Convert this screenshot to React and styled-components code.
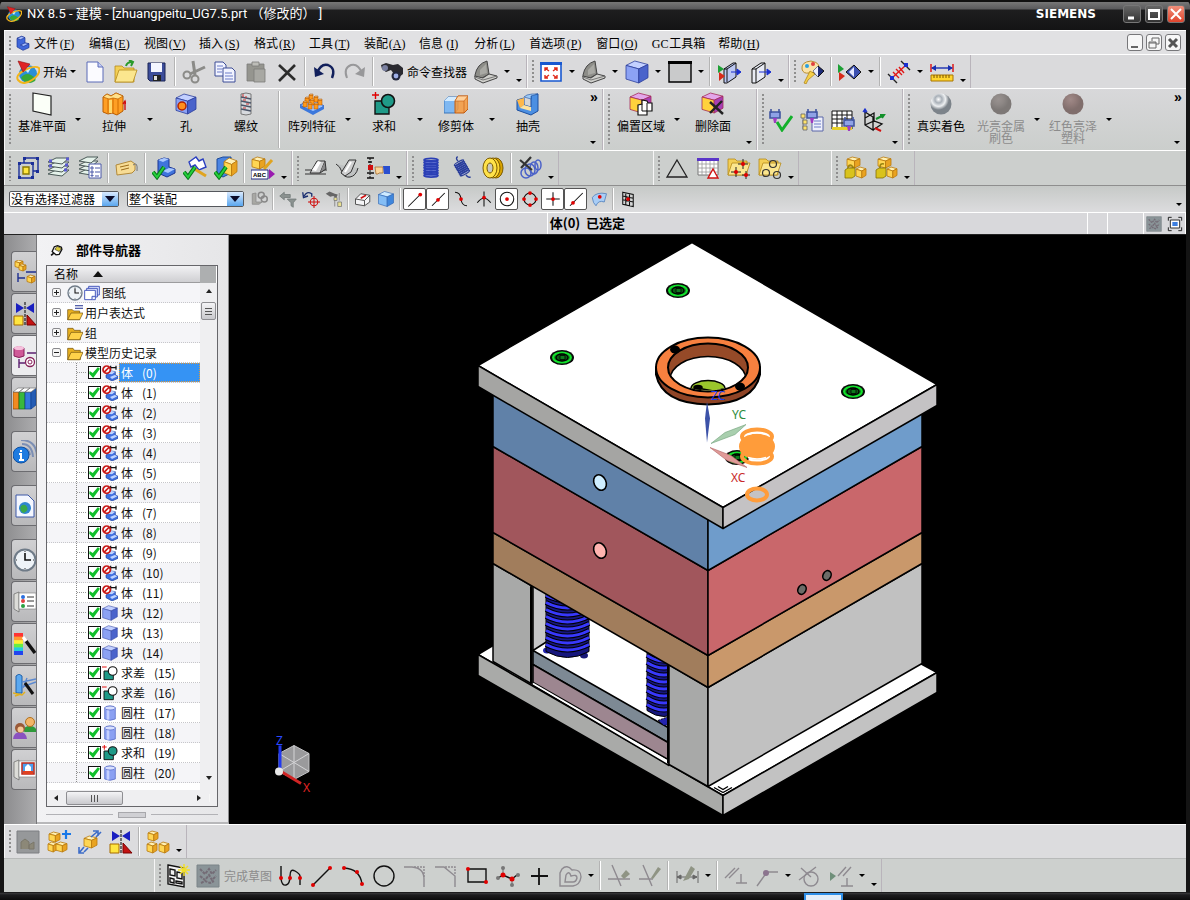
import React from 'react'
import styled, {createGlobalStyle, css} from 'styled-components'

const cjk = `'Noto Sans CJK SC', sans-serif`

const GlobalStyle = createGlobalStyle`
	*, *::before, *::after {
		box-sizing: border-box;
	}
	body {
		margin: 0;
		background: #101010;
		font: 12px/12px ${cjk};
		color: #000;
	}
	button, select {
		font: inherit;
		color: inherit;
		padding: 0;
		border: 0;
		background: none;
	}
	ul {
		margin: 0;
		padding: 0;
		list-style: none;
	}
	svg {
		display: block;
		flex: none;
	}
`

/* ---------- drawing helpers ---------- */

const BLUE = ['#c3d0ff', '#8ca2f4', '#4a63cb', '#2c3f9c']
const GOLD = ['#fff0b4', '#ffd653', '#e9a321', '#b97a0c']
const GLASS = ['#cdeaff', '#84bdf5', '#3f86dc', '#2860b0']
const VIOLET = ['#e3a6ea', '#ffd23c', '#a63fb5', '#a32a58']

function Cube({x = 3, y = 2, w = 18, h = 20, c = BLUE}) {
	const p = (a, b) => `${x + a * w},${y + b * h}`
	return (
		<g stroke={c[3]} strokeWidth=".8" strokeLinejoin="round">
			<polygon points={[p(0.4, 0), p(1, 0.16), p(0.58, 0.36), p(0, 0.2)].join(' ')} fill={c[0]} />
			<polygon points={[p(0, 0.2), p(0.58, 0.36), p(0.58, 1), p(0, 0.82)].join(' ')} fill={c[1]} />
			<polygon points={[p(0.58, 0.36), p(1, 0.16), p(1, 0.76), p(0.58, 1)].join(' ')} fill={c[2]} />
		</g>
	)
}

const Dot = ({x, y, r = 2, c = '#e00000'}) => <circle cx={x} cy={y} r={r} fill={c} />

const Tick = () => (
	<g fill="none">
		<path d="M1 16l4 5 7-10" stroke="#0a7a1c" strokeWidth="4" />
		<path d="M1 16l4 5 7-10" stroke="#25d03c" strokeWidth="2" />
	</g>
)

const Folder = ({y = 3}) => (
	<g stroke="#b58a1a" strokeWidth=".8">
		<path d={`M1 ${y + 2}h7l2 2h10v14H1z`} fill="#f3cf55" />
		<path d={`M1 ${y + 18}l4-12h18l-4 12z`} fill="#fbe68e" />
	</g>
)

const Laptop = () => (
	<g stroke="#444" strokeLinejoin="round">
		<path d="M1 15Q3 4 13 1l2 13-7 4-7-1z" fill="#8d8d88" />
		<path d="M6 10l6-6 1 9-7 2z" fill="#a9a9a4" stroke="none" />
		<path d="M1 16l8 2 6-4 8 2v2L9 23l-8-4z" fill="#d0d0cc" />
		<path d="M1 17l8 3 14-4" stroke="#777" fill="none" />
	</g>
)

const Plug = ({x = 0, y = 0}) => (
	<g transform={`translate(${x} ${y})`}>
		<path d="M1 0v4M9 0v4M0 3h10v6H0z" fill="#8fa2e6" stroke="#4256a0" strokeWidth="1.6" />
		<path d="M3 9h4l-1 5H4z" fill="#a03cc0" />
	</g>
)

const Coil = ({c = '#2b3fb5', n = 7}) => (
	<g fill="none" stroke={c} strokeWidth="1.8">
		<path d="M5 4h14v16H5z" fill="#7d8ce0" stroke="none" />
		{Array.from({length: n}, (_, i) => (
			<ellipse key={i} cx="12" cy={4 + i * 2.6} rx="7" ry="1.6" />
		))}
	</g>
)

const Lock = ({open}) => (
	<g>
		<path
			d={open ? 'M6 15V11q0-4 4-3' : 'M5 15v-4q2-4 5 0v4'}
			fill="none"
			stroke="#9a8410"
			strokeWidth="1.6"
		/>
		<path d="M2 14l3-2h7v8l-3 2H2z" fill="#d9c31c" stroke="#837008" strokeWidth=".8" />
	</g>
)

const Mirror = () => (
	<>
		<path d="M3 1v10l8-5zM21 1v10l-8-5z" fill="#1a1fc0" />
		<path d="M12 0v24" stroke="#000" strokeDasharray="3 1" />
		<path d="M1 14h9v9H1z" fill="#ffe640" stroke="#a66a00" />
		<path d="M14 13v10h9z" fill="#c31212" stroke="#7a0000" />
	</>
)

const Ball = ({id, c}) => (
	<>
		<radialGradient id={id} cx="38%" cy="28%">
			{c.map((v, i) => (
				<stop key={v} offset={i / (c.length - 1)} stopColor={v} />
			))}
		</radialGradient>
		<circle cx="12" cy="12" r="10.5" fill={`url(#${id})`} />
	</>
)

const Unite = ({sign, fill = '#1f9a88'}) => (
	<>
		<path d="M3 9h14v13H3z" fill="#1f9a88" stroke="#111" strokeWidth="1.4" />
		<circle cx="16" cy="9" r="6.5" fill={fill} stroke="#111" strokeWidth="1.6" />
		<path d={sign === '+' ? 'M0 3h7M3.500 0v7' : 'M0 3h7'} stroke="#e00000" strokeWidth="1.4" />
	</>
)

const Book = () => (
	<g stroke="#999" strokeWidth=".6">
		<path d="M1 4l5-2v20l-5-3z" fill="#dcdcd8" stroke="#555" />
		<path d="M6 3h17v16H6z" fill="#fff" stroke="#777" />
	</g>
)

const grey = {fill: 'none', stroke: '#8e8a90', strokeWidth: 1.4}
const line = {fill: 'none', stroke: '#111', strokeWidth: 1.4}

const glyphs = {
	nx: (
		<>
			<circle cx="12" cy="14" r="9" fill="#2a8fd8" />
			<path d="M5 18q4-6 10-3t4 6q-8 5-14-3z" fill="#38a838" />
			<path d="M7 8q3-2 8 0l-3 5z" fill="#c9ecff" />
			<path d="M2 20Q-1 15 9 10T23 8q2 6-7 12T2 20z" fill="none" stroke="#f2b51c" strokeWidth="2" />
			<path d="M2 1l12 3-7 8z" fill="#e02424" stroke="#8e0d0d" strokeWidth=".6" />
		</>
	),
	part: (
		<g stroke="#1c3592" strokeWidth="1" strokeLinejoin="round">
			<path d="M3 5l7-3 5 2v8l6 1v6l-9 4-9-5z" fill="#3f67da" />
			<path d="M3 5l7-3 5 2-7 3zM8 15l7-3 6 1-8 4z" fill="#a9c0ff" />
		</g>
	),
	new: (
		<g stroke="#5b6bb8">
			<path d="M4 2h11l5 5v15H4z" fill="#fbfbff" />
			<path d="M15 2v5h5" fill="#c7cff5" />
		</g>
	),
	open: (
		<>
			<Folder y={4} />
			<path d="M12 6q1-4 6-4M15 0l4 2-2 4" fill="none" stroke="#2a9a2a" strokeWidth="2" />
		</>
	),
	save: (
		<>
			<path d="M3 3h17v18H5l-2-2z" fill="#3c4d9a" stroke="#1a2455" />
			<path d="M6 3h11v9H6z" fill="#f4f6ff" />
			<path d="M8 15h8v6H8z" fill="#222" />
			<path d="M9 16h3v4H9z" fill="#ddd" />
		</>
	),
	cut: (
		<g fill="none" stroke="#8b8b88" strokeWidth="2">
			<path d="M11 1l2 14M23 7L8 14" strokeWidth="3" />
			<circle cx="5" cy="15" r="3.5" />
			<circle cx="13" cy="19" r="3.5" />
		</g>
	),
	copy: (
		<g stroke="#3d4c96">
			<path d="M2 2h8l3 3v11H2z" fill="#f2f4ff" />
			<path d="M10 8h9l3 3v11H10z" fill="#f2f4ff" />
			<path d="M4 6h6M4 9h5M4 12h5M12 13h7M12 16h8M12 19h8" stroke="#6d7dc8" />
		</g>
	),
	paste: (
		<g stroke="#7c7c78" strokeWidth=".8">
			<path d="M3 4h17v17H3z" fill="#95958f" />
			<path d="M8 2h7v4H8z" fill="#bdbdb8" />
			<path d="M10 9h11v13H10z" fill="#a8a8a3" />
		</g>
	),
	del: <path d="M4 5l16 15M20 5L4 21" stroke="#2c2c2c" strokeWidth="2.6" />,
	undo: (
		<>
			<path d="M5 13Q9 3 16 5q8 3 4 13" fill="none" stroke="#12205c" strokeWidth="2.4" />
			<path d="M2 7l1 10 9-3z" fill="#12205c" />
		</>
	),
	redo: (
		<>
			<path d="M19 13Q15 3 8 5 0 8 4 18" fill="none" stroke="#98989a" strokeWidth="2" />
			<path d="M22 7l-1 10-9-3z" fill="#98989a" />
		</>
	),
	binoc: (
		<>
			<path d="M1 5l5-2 7 2 5-1 5 4v6l-5 4-4-4-3-4-5 2-4-3z" fill="#2a2a30" />
			<circle cx="5" cy="8" r="3" fill="#7a80a0" />
			<circle cx="16" cy="16" r="4.5" fill="#23283e" />
			<circle cx="16" cy="16" r="2.4" fill="#9fb0e8" />
		</>
	),
	laptop: <Laptop />,
	fit: (
		<>
			<path d="M2 3h20v18H2z" fill="#fff" stroke="#1858d0" strokeWidth="1.6" />
			<path d="M1 2h22v3H1z" fill="#1858d0" />
			<path
				d="M10 11L6 8M6 11V8h3M14 11l4-3M15 8h3v3M10 15l-4 3M6 15v3h3M14 15l4 3M18 15v3h-3"
				fill="none"
				stroke="#e02a1a"
				strokeWidth="1.4"
			/>
		</>
	),
	cube: <Cube x={1} y={1} w={22} h={22} />,
	box: (
		<>
			<path d="M1 2h22v20H1z" fill="#c9cacb" stroke="#000" strokeWidth="1.4" />
			<path d="M0 1h24v3H0z" fill="#000" />
		</>
	),
	section: (
		<>
			<path d="M7 9l9-6h3v14l-9 6H7z" fill="#bdc8f2" stroke="#111" />
			<path d="M10 9v13M7 9h3l9-6" stroke="#111" fill="none" />
			<path d="M1 5l6 4-6 4z" fill="#1da035" />
			<path d="M2 12l6 4-6 5z" fill="#d82a1a" />
			<path d="M14 12h7M20 9l4 3-4 3z" stroke="#1a2fd0" fill="#1a2fd0" />
		</>
	),
	sectionEdit: (
		<>
			<path d="M4 9l9-6h4v14l-9 6H4z" fill="#e8ebf4" stroke="#111" />
			<path d="M8 9v14M4 9h4l9-6" stroke="#111" fill="none" />
			<path d="M11 12h9M19 9l4 3-4 3z" stroke="#1a2fd0" fill="#1a2fd0" />
		</>
	),
	palette: (
		<>
			<path d="M10 1Q0 2 1 9q1 5 7 4l8-1q6-9-6-11z" fill="#fbe3a8" stroke="#b98d30" />
			<Dot x={6} y={6} c="#2aa0e0" />
			<Dot x={12} y={4} c="#e04040" />
			<path d="M9 11l5 3-7 6-2 4-2-1 3-6z" fill="#f5cf4a" stroke="#a87c10" strokeWidth=".7" />
			<path d="M12 11l5-5 6 5-6 6z" fill="#1d2b78" stroke="#111" />
			<path d="M17 6l-5 5 5 6z" fill="#e9edff" />
		</>
	),
	showHide: (
		<>
			<path d="M0 4l6 5-6 4z" fill="#1da035" />
			<path d="M1 12l6 4-6 5z" fill="#d82a1a" />
			<path d="M8 12l8-7 7 7-7 7z" fill="#3c50b0" stroke="#111" />
			<path d="M16 7l-5 5 5 5z" fill="#e5e9ff" />
		</>
	),
	measure: (
		<g strokeWidth="1.4">
			<path d="M1 14l9 9M14 1l9 9" stroke="#222" />
			<path d="M5 18L19 5" stroke="#e01818" />
			<path d="M6 12l6 6M9 9l6 6M12 7l5 6" stroke="#e01818" />
			<path d="M3 16h4v4H3zM17 3h4v4h-4z" fill="#1a2fd0" />
		</g>
	),
	ruler: (
		<>
			<path d="M1 4v8M23 4v8" stroke="#e01818" strokeWidth="1.5" />
			<path d="M2 8h20" stroke="#1a2fb0" strokeWidth="1.4" />
			<path d="M1 8l5-3v6zM23 8l-5-3v6z" fill="#1a2fb0" />
			<path d="M1 15h22v6H1z" fill="#ffd52e" stroke="#a87400" />
			<path d="M4 15v3M7 15v3M10 15v3M13 15v3M16 15v3M19 15v3" stroke="#7a5200" />
		</>
	),
	plane: <path d="M3 1l18 3v19L3 19z" fill="#fbfff8" stroke="#222" strokeWidth="1.2" />,
	extrude: (
		<>
			<path d="M1 5l4-3 4 2 5-3 7 3v15l-6 4-5-2-4 1-5-2z" fill="#ff9f24" stroke="#b85c00" />
			<path d="M1 5l4-3 4 2 5-3 7 3-5 3-5-1-4 1z" fill="#ffe08a" stroke="#b85c00" strokeWidth=".7" />
			<path d="M6 7v14M11 6v15M16 7v15" stroke="#d06c00" />
			<path d="M7 8h3v13H7z" fill="#ffd76a" />
			<path d="M23 18V9M21 12l2-3 1 3" stroke="#d01010" fill="none" strokeWidth="1.4" />
		</>
	),
	hole: (
		<>
			<Cube x={2} y={2} w={20} h={20} />
			<circle cx="8" cy="14" r="4" fill="#ff8f1c" stroke="#b32400" strokeWidth="1.5" />
		</>
	),
	thread: (
		<>
			<path d="M7 2q5-2 10 0v20q-5 2-10 0z" fill="#d7dade" stroke="#777" />
			<path d="M7 5l10 2M7 9l10 2M7 13l10 2M7 17l10 2" stroke="#4b5568" strokeWidth="1.6" />
			<path d="M9 2v3M12 4v2M9 8h3M12 12h3M9 16h3" stroke="#c33" />
		</>
	),
	pattern: (
		<>
			<path d="M0 13l12-6 12 7-11 7z" fill="#9dc4ff" stroke="#2f66c8" />
			<path d="M0 13l13 6 11-5v3l-11 6L0 16z" fill="#3c78dc" />
			{[[11, 6], [7, 9], [16, 8], [12, 11], [5, 13], [20, 11], [10, 15], [16, 15]].map(([x, y]) => (
				<g key={`${x}-${y}`} stroke="#a85200" strokeWidth=".5">
					<path d={`M${x - 2} ${y - 3}h4v5h-4z`} fill="#ff9a1e" />
					<path d={`M${x - 2} ${y - 3}l1-1h3v1z`} fill="#ffd28a" />
				</g>
			))}
		</>
	),
	unite: <Unite sign="+" />,
	subtract: <Unite sign="-" fill="#fff" />,
	trim: (
		<>
			<path d="M0 9l4-4h10v12l-3 4H0z" fill="#7fb8f2" stroke="#3b74b8" />
			<path d="M0 9h11l3-4H4z" fill="#d3ebff" />
			<path d="M11 9l3-5h10v13l-4 4h-9z" fill="#f79a3c" fillOpacity=".85" stroke="#c25c10" />
			<path d="M11 9h9l4-5H14zM20 9v12" fill="#ffd09a" stroke="#c25c10" strokeWidth=".6" />
		</>
	),
	shell: (
		<>
			<path d="M1 8l7-2v7l7 2V3l7-1v17l-7 4-14-5z" fill="#4b8fe2" stroke="#1d4f9e" />
			<path d="M1 8l7-2v7l-4 3z" fill="#ffb84a" />
			<path d="M4 16l4-3 7 2v4z" fill="#ffe3a0" />
			<path d="M8 5l3-2 5-1 6 0-7 2v3z" fill="#9fcaf6" stroke="#1d4f9e" strokeWidth=".6" />
		</>
	),
	offset: (
		<>
			<Cube x={1} y={1} w={21} h={20} c={VIOLET} />
			<path d="M9 13l4-1V8l5 1 1 2h4v8h-5v4h-9z" fill="#fff" stroke="#111" strokeWidth="1.2" />
			<path d="M13 12v7h5M18 11v8" stroke="#111" fill="none" />
		</>
	),
	delFace: (
		<>
			<Cube x={1} y={1} w={21} h={20} c={VIOLET} />
			<path d="M9 10l13 12M21 9L9 21" stroke="#222" strokeWidth="2.4" />
		</>
	),
	plugCheck: (
		<>
			<Plug x={1} y={1} />
			<path d="M8 14l5 8L23 8" fill="none" stroke="#12b02a" strokeWidth="3" />
		</>
	),
	plugTree: (
		<>
			<path d="M3 8v13" stroke="#777" />
			<path d="M1 6h4v4H1zM3 12h4v4H3zM3 18h4v4H3z" fill="#ffe36a" stroke="#666" strokeWidth=".8" />
			<path d="M12 9h11v14H12z" fill="#eef0fb" stroke="#5b66a8" />
			<path d="M14 13h7M14 16h7M14 19h7" stroke="#6d7dc8" />
			<Plug x={7} y={1} />
		</>
	),
	plugTable: (
		<>
			<path d="M1 3h20v18H1z" fill="#fff" stroke="#111" />
			<path d="M1 7h20M1 11h20M1 15h20M6 3v16M11 3v16M16 3v16" stroke="#111" />
			<path d="M1 19h20v3H1z" fill="#e6cf28" />
			<Plug x={13} y={9} />
		</>
	),
	csys: (
		<g strokeWidth="1.3" fill="none">
			<path d="M3 4v13l8 5V9zM3 10l9-5v9M3 17l9-4 8 3-9 6" stroke="#111" />
			<path d="M3 5V1M1 4l2-3 2 3" stroke="#1a2fd0" />
			<path d="M14 11l8-4M18 7l4 0-2 3" stroke="#12902a" strokeWidth="2" />
			<path d="M13 20l6 3" stroke="#d01010" strokeWidth="2" />
		</g>
	),
	chrome: <Ball id="ballChrome" c={['#ffffff', '#a9b0b8', '#eef0f2', '#7c838a']} />,
	metal: <Ball id="ballMetal" c={['#999290', '#8e8886', '#7d7876']} />,
	gloss: <Ball id="ballGloss" c={['#a08a88', '#927c7a', '#806e6c']} />,
	selBox: (
		<g fill="none" stroke="#1b2f98" strokeWidth="1.4">
			<path d="M8 2h14v13h-5M8 2v5M3 7h14v15H3z" />
			<path d="M7 11h6v7H7z" fill="#ffe640" stroke="#8c7a00" />
			<path d="M2 6h3v3H2zM15 6h3v3h-3zM2 20h3v3H2zM15 20h3v3h-3zM20 1h3v3h-3zM20 14h3v3h-3zM7 1h3v3H7z" fill="#1b2f98" stroke="none" />
		</g>
	),
	layers: (
		<g stroke="#4b5a58" strokeWidth="1">
			{[18, 14, 10, 6].map(y => (
				<path key={y} d={`M1 ${y}l8-4h13l-7 6z`} fill="#e4f2ea" />
			))}
			<path d="M2 5h3M19 3h3M18 9h3M2 10h3M17 14h3" stroke="#5b5bd0" strokeWidth="3" />
		</g>
	),
	layerList: (
		<g stroke="#4b5a58">
			{[17, 13, 9, 5].map(y => (
				<path key={y} d={`M1 ${y}l8-4h11l-7 6z`} fill="#e4f2ea" />
			))}
			<path d="M11 8h12v14H11z" fill="#fff" stroke="#4b58a8" />
			<path d="M13 11h2v2h-2zM13 15h2v2h-2zM13 19h2v1h-2zM17 12h5M17 16h5M17 20h4" stroke="#4b58a8" fill="none" />
		</g>
	),
	tag: (
		<>
			<path d="M1 9l15-4 4 3v6l-3 3-15 2z" fill="#f7dc94" stroke="#b28a3a" />
			<path d="M5 11l9-2M6 14l8-2" stroke="#9c6c1c" />
			<path d="M18 9q5-4 4 6" fill="none" stroke="#777" />
		</>
	),
	chkPart: (
		<>
			<path d="M6 4l6-2 5 1v8l6 2v4l-8 4-9-4z" fill="#3f74dc" stroke="#1c3592" />
			<path d="M6 4l6-2 5 1-6 3zM11 15l6-3 6 1-7 4z" fill="#a9c8ff" />
			<Tick />
		</>
	),
	chkBrush: (
		<>
			<path d="M6 6l7-5 3 4 4-2 3 8-7 3-4-5-4 2z" fill="#fff" stroke="#2a3fc0" strokeWidth="1.4" />
			<path d="M10 12l13 8" stroke="#e0a420" strokeWidth="3" />
			<Tick />
		</>
	),
	chkAsm: (
		<>
			<path d="M3 3l6-2h8v16l-8 4-6-3z" fill="#4b85e2" stroke="#1c4a9a" />
			<Cube x={10} y={2} w={13} h={18} c={GOLD} />
			<Tick />
		</>
	),
	abc: (
		<>
			<Cube x={1} y={1} w={13} h={12} c={GOLD} />
			<path d="M21 4l-8 9" stroke="#e0a420" strokeWidth="3" />
			<path d="M0 14h17v9H0z" fill="#fff" stroke="#222a80" />
			<text x="2" y="21" fontSize="6" fontWeight="700" fontFamily="Liberation Sans">
				ABC
			</text>
			<path d="M18 13l6 5-6 5z" fill="#9a1ab0" />
		</>
	),
	rib: (
		<g stroke="#333">
			<path d="M1 14h22M1 18h21" />
			<path d="M6 17L13 5h8l-5 12z" fill="#cfd0d0" />
			<path d="M21 5l1 8-6 4" fill="#888" />
			<path d="M8 14l6-9 3 1-5 9z" fill="#fff" stroke="none" />
		</g>
	),
	groove: (
		<g stroke="#333">
			<path d="M1 8q4 2 6 8t8 5 8-9" fill="#bfc2c2" />
			<path d="M6 17L14 4h7l-5 12-6 4z" fill="#cfd0d0" />
			<path d="M10 16l6-10" stroke="#fff" strokeWidth="2" />
		</g>
	),
	handList: (
		<>
			<path d="M1 2h7M2 6h4M1 17h7M1 22h7" stroke="#111" strokeWidth="1.6" />
			<path d="M4 2v20" stroke="#111" strokeDasharray="2 1" />
			<path d="M2 9h5v5H2z" fill="#d01010" />
			<path d="M9 11h8v6h-4l-1 1h-2z" fill="#f8d49a" stroke="#a87030" strokeWidth=".8" />
			<path d="M17 10h7v8h-6z" fill="#2a4fd0" />
		</>
	),
	spring: <Coil />,
	springTilt: (
		<g transform="rotate(-30 12 12)">
			<g transform="translate(3 3) scale(.75)">
				<Coil c="#2b3f98" />
			</g>
			<path d="M12 4q-1-4 2-4M12 20q0 4 3 4" fill="none" stroke="#2b3f98" strokeWidth="1.4" />
		</g>
	),
	disc: (
		<>
			<ellipse cx="15" cy="12" rx="7" ry="10" fill="#d9a400" stroke="#7a5a00" />
			<ellipse cx="12" cy="12" rx="7" ry="10" fill="#ffd833" stroke="#7a5a00" />
			<ellipse cx="9" cy="12" rx="7" ry="10" fill="#ffe24a" stroke="#7a5a00" />
			<ellipse cx="9" cy="12" rx="3" ry="5" fill="#c9c9c0" stroke="#7a5a00" />
		</>
	),
	springDel: (
		<>
			<g fill="none" stroke="#4b62c8" strokeWidth="1.5">
				<ellipse cx="8" cy="17" rx="5" ry="5" />
				<ellipse cx="12" cy="14" rx="5" ry="6" />
				<ellipse cx="16" cy="12" rx="4" ry="6" />
				<ellipse cx="20" cy="9" rx="3" ry="5" />
			</g>
			<path d="M2 4l12 10M13 1L3 12" stroke="#333" strokeWidth="2.2" />
		</>
	),
	tri: <path d="M12 4l10 17H2z" fill="none" stroke="#222" strokeWidth="1.3" />,
	table: (
		<>
			<path d="M2 3h20v16H2z" fill="#fff" stroke="#777" />
			<path d="M1 2h22v3H1z" fill="#5a35c8" />
			<path d="M2 8h20M2 12h20M2 16h20M6 5v14M10 5v14M14 5v14M18 5v14" stroke="#999" strokeWidth=".8" />
			<path d="M17 13l5 9H12z" fill="#fff" stroke="#d01010" strokeWidth="1.4" />
		</>
	),
	folderPts: (
		<>
			<Folder y={1} />
			<path d="M4 16h10M9 11v10M11 8h10M16 3v10M15 19h8M19 15v8" stroke="#222" />
			<Dot x={9} y={16} />
			<Dot x={16} y={8} />
			<Dot x={19} y={19} />
		</>
	),
	folderCirc: (
		<>
			<Folder y={1} />
			<g fill="none" stroke="#333" strokeWidth="1.2">
				<circle cx="15" cy="8" r="3.5" />
				<circle cx="8" cy="17" r="3.5" />
				<circle cx="19" cy="19" r="3.5" />
			</g>
		</>
	),
	lockAsm: (
		<>
			<Cube x={4} y={1} w={13} h={11} c={GOLD} />
			<Cube x={13} y={11} w={10} h={11} c={GOLD} />
			<Lock />
		</>
	),
	unlockAsm: (
		<>
			<Cube x={4} y={1} w={13} h={11} c={GOLD} />
			<Cube x={13} y={11} w={10} h={11} c={GOLD} />
			<Lock open />
		</>
	),
	chain: (
		<g fill="none" stroke="#888" strokeWidth="2">
			<path d="M3 5v14h9l4-3H8V4z" fill="#a8a8a4" strokeWidth="1" />
			<circle cx="15" cy="7" r="4" />
			<circle cx="19" cy="12" r="4" />
		</g>
	),
	filterOff: (
		<g fill="#8b9290" stroke="#6f7775">
			<path d="M1 8l6-5v3h8v4H7v3z" />
			<path d="M11 12h12l-4 5v6l-3-2v-4z" />
		</g>
	),
	snapUndo: (
		<>
			<path d="M3 8q3-7 10-3v4M1 3l1 7 6-2" fill="none" stroke="#1b2f70" strokeWidth="1.8" />
			<circle cx="16" cy="16" r="5" fill="none" stroke="#d01010" strokeWidth="1.4" />
			<path d="M16 8v16M8 16h16" stroke="#d01010" strokeWidth="1.4" />
		</>
	),
	snapTree: (
		<>
			<path d="M1 5l5-3 7 3 4 1-2 5-4-3-4 1z" fill="#666" />
			<path d="M12 10h4v4h-4zM17 16h5v6h-5z" fill="#e9e090" stroke="#777" />
			<path d="M13 14v8M19 4v10" stroke="#777" />
		</>
	),
	wire: (
		<g stroke="#444" strokeWidth="1.2">
			<path d="M2 12l7-7 12 2v9l-7 5-12-2z" fill="#f4f4f6" />
			<path d="M2 12l12 2 7-7M14 14v7" fill="none" />
			<path d="M9 11l7-4" stroke="#d01010" strokeWidth="2" />
		</g>
	),
	glass: <Cube x={2} y={2} w={20} h={20} c={GLASS} />,
	ptEnd: (
		<>
			<path d="M3 22L18 7" {...line} />
			<Dot x={19} y={6} r={2.5} />
		</>
	),
	ptMid: (
		<>
			<path d="M4 21L21 4" {...line} />
			<Dot x={12} y={13} r={2.5} />
		</>
	),
	ptCurve: (
		<>
			<path d="M4 3q7 0 8 9t8 9" {...line} />
			<Dot x={12} y={12} r={2.5} />
		</>
	),
	ptCross: (
		<>
			<path d="M12 2v20M3 17q9-12 18 0" {...line} />
			<Dot x={12} y={10} r={2.5} />
		</>
	),
	ptCenter: (
		<>
			<circle cx="12" cy="12" r="9" {...line} />
			<Dot x={12} y={12} r={2.5} />
		</>
	),
	ptQuad: (
		<>
			<circle cx="12" cy="12" r="8" {...line} />
			<Dot x={12} y={4} r={2.5} />
			<Dot x={12} y={20} r={2.5} />
			<Dot x={4} y={12} r={2.5} />
			<Dot x={20} y={12} r={2.5} />
		</>
	),
	ptExist: (
		<>
			<path d="M12 3v18M3 12h18" {...line} />
			<Dot x={12} y={12} r={2.5} />
		</>
	),
	ptOn: (
		<>
			<path d="M4 21L21 4" {...line} />
			<Dot x={8} y={17} r={2.5} />
		</>
	),
	ptFace: (
		<>
			<path d="M3 10q6-8 19-5l-3 11q-8-3-11 5-4-3-5-11z" fill="#a9cdf6" stroke="#4a7ab8" />
			<Dot x={13} y={9} r={2.5} />
		</>
	),
	grid: (
		<>
			<path d="M5 3l14 3v16L5 19zM5 8l14 3M5 13l14 3M9 4v16M14 5v16" {...line} />
			<Dot x={12} y={12} r={2.5} />
		</>
	),
	off: (
		<>
			<path d="M1 1h22v22H1z" fill="#8a9498" stroke="#7a8488" />
			<path
				d="M4 5l5 5 4-5 3 5 4-4M4 12l5 4 4-5 3 5 4-4M5 19l4-2 5 2 4-2"
				fill="none"
				stroke="#746c76"
				strokeWidth="2"
				strokeDasharray="3 1"
			/>
		</>
	),
	offAsm: (
		<>
			<path d="M1 1h22v22H1z" fill="#96989a" stroke="#7c7e82" />
			<path d="M5 19v-7l4-3 4 3v7M13 19v-4l5-3v7z" fill="#8c8878" stroke="#7a776a" />
		</>
	),
	full: (
		<>
			<path d="M2 7V2h5M17 2h5v5M22 17v5h-5M7 22H2v-5" fill="none" stroke="#222" strokeWidth="1.5" />
			<path d="M5 6h14v12H5z" fill="#fff" stroke="#333" strokeWidth="1.5" />
			<path d="M8 9h8v6H8z" fill="#3c7ee0" />
		</>
	),
	asmAdd: (
		<>
			<Cube x={2} y={2} w={11} h={10} c={GOLD} />
			<Cube x={1} y={12} w={9} h={10} c={GOLD} />
			<Cube x={9} y={12} w={11} h={10} c={GOLD} />
			<path d="M19 0v9M15 4h9" stroke="#1878e8" strokeWidth="2.2" />
		</>
	),
	asmMove: (
		<>
			<Cube x={6} y={6} w={13} h={12} c={GOLD} />
			<path
				d="M13 7l6-5M15 1h5v5M18 7l5-5M1 23l5-6M1 17v6h5M6 22l4-4"
				fill="none"
				stroke="#3c6cc8"
				strokeWidth="1.6"
			/>
		</>
	),
	mirror: <Mirror />,
	asmArr: (
		<>
			<Cube x={2} y={1} w={10} h={10} c={GOLD} />
			<Cube x={1} y={12} w={10} h={11} c={GOLD} />
			<Cube x={13} y={12} w={10} h={11} c={GOLD} />
		</>
	),
	sketch: (
		<>
			<path d="M2 1l16 3v19L2 20z" fill="#f2f2f2" stroke="#111" strokeWidth="1.4" />
			<path d="M4 5l5 1v6l-5-1zM11 8l5 1v6l-5-1zM4 14l4 1v4l-4-1zM10 17l6 1v2l-6-1z" {...line} />
			<path d="M18 0v12M12 6h12M14 2l8 8M22 2l-8 8" stroke="#f2df2a" strokeWidth="1.5" />
		</>
	),
	profile: (
		<>
			<path d="M2 2v13q1 7 5 6t4-9 5-5 5 5v9" {...line} />
			<Dot x={2} y={14} />
			<Dot x={11} y={14} />
			<Dot x={21} y={14} />
		</>
	),
	skLine: (
		<>
			<path d="M3 21L20 4" {...line} />
			<Dot x={3} y={21} />
			<Dot x={20} y={4} />
		</>
	),
	arc: (
		<>
			<path d="M3 4q16 1 18 16" {...line} />
			<Dot x={3} y={4} />
			<Dot x={16} y={8} />
			<Dot x={21} y={20} />
		</>
	),
	circle: <circle cx="12" cy="12" r="10" {...line} />,
	fillet: (
		<>
			<path d="M1 3h8q12 1 12 12v8" {...grey} />
			<path d="M11 3h10v10" {...grey} strokeDasharray="2 1" />
		</>
	),
	chamfer: (
		<>
			<path d="M1 3h9l11 9v11" {...grey} />
			<path d="M11 3h10v8" {...grey} strokeDasharray="2 1" />
		</>
	),
	rect: (
		<>
			<path d="M3 5h18v13H3z" {...line} />
			<Dot x={3} y={5} />
			<Dot x={21} y={18} />
		</>
	),
	spline: (
		<>
			<path d="M2 14l5-3 9 4 5-4" {...line} />
			<path d="M7 11V4M16 15v6" stroke="#888" strokeWidth="1.4" />
			<Dot x={2} y={14} c="#777" />
			<Dot x={7} y={4} c="#777" />
			<Dot x={16} y={21} c="#777" />
			<Dot x={22} y={11} c="#777" />
			<Dot x={7} y={11} r={2.5} />
			<Dot x={16} y={15} r={2.5} />
		</>
	),
	point: <path d="M12 4v17M4 12h17" stroke="#111" strokeWidth="1.8" />,
	offCurve: <path d="M4 5q5-5 10 1 9-1 9 7-1 8-8 9H2V9zM8 11q3-5 5 1 6-2 6 2-1 4-4 4H7z" {...grey} />,
	trimSk: (
		<>
			<path d="M5 1l9 21M1 15h22" {...grey} />
			<path d="M14 12l5-6 4 4-6 5z" fill="#8f9484" />
		</>
	),
	extSk: (
		<>
			<path d="M5 1l9 21M1 15h14" {...grey} />
			<path d="M13 14l7-11 3 2-8 10z" fill="#8f9484" />
		</>
	),
	dim: (
		<>
			<path d="M2 7v12M23 7v12M2 13h20M2 13l4-2v4zM22 13l-4-2v4z" stroke="#666" fill="#666" />
			<path d="M8 17l8-15 4 3-6 10z" fill="#8f9484" />
		</>
	),
	parallel: <path d="M1 14L11 4M5 14L15 4M12 19h11M17 10v9" {...grey} />,
	coincide: (
		<>
			<path d="M2 22L12 8h11" {...grey} />
			<Dot x={11} y={9} r={3} c="#8b748e" />
		</>
	),
	tangent: (
		<>
			<circle cx="13" cy="15" r="7" {...grey} />
			<path d="M1 16L18 3M3 4l10 9" {...grey} />
		</>
	),
	autoCon: (
		<>
			<path d="M1 8l6 4-6 5z" fill="#6f8f7a" />
			<path d="M9 12l8-9M14 12l8-9M12 22h12M18 14v8" {...grey} />
		</>
	),
	asmNav: (
		<>
			<Cube x={2} y={0} w={8} h={8} c={GOLD} />
			<Cube x={6} y={4} w={7} h={7} c={GOLD} />
			<Cube x={14} y={15} w={8} h={8} c={GOLD} />
			<path d="M13 12h10M5 13v9M5 18h7" stroke="#1f2f90" strokeWidth="1.4" />
		</>
	),
	partNav: (
		<>
			<path d="M1 4q5-3 10 0v8q-5 3-10 0z" fill="#cf5a98" stroke="#86215a" />
			<ellipse cx="6" cy="4" rx="5" ry="2" fill="#f6c0dc" />
			<path d="M14 9h9M6 15v9M6 19h6" stroke="#5b1f70" strokeWidth="1.4" />
			<circle cx="17" cy="18" r="4.5" fill="#fff" stroke="#86215a" strokeWidth="1.3" />
			<circle cx="17" cy="18" r="2" fill="none" stroke="#86215a" />
		</>
	),
	books: (
		<g strokeWidth=".7">
			<path d="M0 6h6v17H0z" fill="#f08a22" stroke="#8c4200" />
			<path d="M6 6h6v17H6z" fill="#39b83c" stroke="#0f6a18" />
			<path d="M12 6h6v17h-6z" fill="#3478dc" stroke="#123f8c" />
			<path d="M18 6l5-4v17l-5 4z" fill="#245cb4" stroke="#123f8c" />
			<path d="M0 6l5-4h6L6 6zM6 6l5-4h6l-5 4zM12 6l5-4h6l-5 4z" fill="#fff" stroke="#777" />
		</g>
	),
	info: (
		<>
			<path d="M9 4q10 0 11 13M8 0q15 0 16 16M11 8q5 1 6 7" fill="none" stroke="#7c8fb4" strokeWidth="2" />
			<circle cx="8" cy="15" r="8" fill="#1e7be0" stroke="#0f4fa0" />
			<path d="M8 10v2M6 14h2v6M6 20h5" stroke="#fff" strokeWidth="2" fill="none" />
		</>
	),
	web: (
		<>
			<path d="M3 1h12l6 6v16H3z" fill="#f4f7ff" stroke="#3c58a8" />
			<circle cx="12" cy="14" r="6" fill="#2f86cf" />
			<path d="M8 12q4-3 6 1t-4 6q-4-3-2-7z" fill="#39a84a" />
		</>
	),
	clock: (
		<>
			<circle cx="12" cy="12" r="10.5" fill="#eef3f8" stroke="#6f7b88" strokeWidth="2" />
			<path d="M12 5v7h6" fill="none" stroke="#111" strokeWidth="1.6" />
			<path d="M12 3v1M12 20v1M3 12h1M20 12h1" stroke="#333" />
		</>
	),
	roles: (
		<>
			<Book />
			<Dot x={10} y={7} c="#2a6fe0" />
			<Dot x={10} y={11} c="#e04040" />
			<Dot x={10} y={16} c="#2aa040" />
			<path d="M14 7h7M14 11h7M14 16h7" stroke="#333" />
		</>
	),
	colors: (
		<>
			{['#f33', '#f93', '#fe3', '#6e4', '#2cd', '#24e'].map((c, i) => (
				<path key={c} d={`M1 ${1 + i * 3.6}h9v4H1z`} fill={c} />
			))}
			<path d="M13 9l9 12" stroke="#111" strokeWidth="3.5" />
			<path d="M10 5l3 4" stroke="#fff" strokeWidth="3" />
		</>
	),
	machine: (
		<>
			<path d="M3 2l3-2 3 2v17H3z" fill="#5aa8f0" stroke="#2060a8" />
			<path d="M9 8l14-3M9 13l14-5M14 4l-4 10" stroke="#5a88d0" strokeWidth="1.4" />
			<path d="M0 19l9 2 3-3M2 22l6-2" fill="none" stroke="#e0b020" strokeWidth="1.5" />
			<path d="M12 9l8 11" stroke="#111" strokeWidth="3" />
		</>
	),
	people: (
		<>
			<path d="M10 15q1-5 7-5t7 6H12z" fill="#2f9a3a" />
			<circle cx="17" cy="6" r="4.5" fill="#f2b568" stroke="#b0701c" />
			<path d="M0 23q1-7 7-7t7 7z" fill="#8a52c0" />
			<circle cx="7" cy="12" r="5" fill="#9a5a38" />
			<circle cx="7.5" cy="13.5" r="3" fill="#f7c896" />
		</>
	),
	scene: (
		<>
			<Book />
			<path d="M9 5h12v11H9z" fill="#4aa0f0" stroke="#c02a1a" strokeWidth="1.5" />
			<path d="M12 15V9l3-3 3 3v6z" fill="#fff" />
			<path d="M10 13h10v3H10z" fill="#e04020" />
		</>
	),
	pin: (
		<>
			<path d="M4 14l4-9 6-2 7 3 1 4-5 9-6 1z" fill="#fff" stroke="#111" strokeWidth="2.4" />
			<path d="M13 4l8 4-4 6-8-4z" fill="#d8c83c" stroke="#111" />
			<path d="M7 17l-5 4" stroke="#111" strokeWidth="3" />
		</>
	),
	sheets: (
		<g stroke="#3c50b8" strokeWidth="1.4">
			<path d="M7 2h16v13H7z" fill="#dfe4ff" />
			<path d="M4 5h16v13H4z" fill="#dfe4ff" />
			<path d="M1 8h16v14H1z" fill="#fff" />
			<path d="M17 17h-5v5" fill="#dfe4ff" />
		</g>
	),
	folder: (
		<g stroke="#6c4c0a">
			<path d="M1 5h8l2 3h9v14H1z" fill="#e8b020" />
			<path d="M1 22l5-11h18l-5 11z" fill="#ffd24a" />
		</g>
	),
	folderEq: (
		<>
			<g stroke="#6c4c0a">
				<path d="M1 7h7l2 2h9v13H1z" fill="#e8b020" />
				<path d="M1 22l5-10h18l-5 10z" fill="#ffd24a" />
			</g>
			<path d="M12 1h12M12 5h12" stroke="#1f2f90" strokeWidth="1.6" />
		</>
	),
	body: (
		<>
			<path d="M12 4h10M13 1v6M21 1v6" stroke="#111" strokeWidth="1.8" />
			<path d="M9 13l5-4 6 1v5l4 2v3l-9 4-9-5v-4z" fill="#3f6fe0" stroke="#1c3f9a" />
			<path d="M9 13l5-4 6 1-5 4zM12 18l7-3 4 2-8 4z" fill="#c0d4ff" />
			<circle cx="7" cy="7" r="5.5" fill="#fff" fillOpacity=".7" stroke="#c81818" strokeWidth="2.6" />
			<path d="M3 11l8-8" stroke="#c81818" strokeWidth="2.6" />
		</>
	),
	cyl: (
		<>
			<path d="M4 4q8-5 16 0v17q-8 4-16 0z" fill="#8aa0f2" stroke="#4a5fc0" />
			<path d="M7 6h4v16H7z" fill="#c5d0ff" />
			<ellipse cx="12" cy="4.5" rx="8" ry="3" fill="#d8e0ff" stroke="#4a5fc0" />
		</>
	),
}

function Icon({name, size = 24}) {
	return (
		<svg width={size} height={size} viewBox="0 0 24 24" aria-hidden="true">
			{glyphs[name]}
		</svg>
	)
}

/* ---------- window frame ---------- */

const Window = styled.div`
	display: flex;
	flex-direction: column;
	height: 100vh;
	min-height: 600px;
	background: #141414;
	border-radius: 6px 6px 0 0;
	overflow: hidden;
`

const TitleBar = styled.header`
	flex: none;
	display: flex;
	align-items: center;
	height: 30px;
	padding: 0 5px 2px 6px;
	color: #fff;
	background: linear-gradient(#111 0, #111 2px, #777 2px, #5a5a5c 9px, #1e1e1f 10px, #141415 30px);
`

const Title = styled.h1`
	flex: 1;
	margin: 0 0 0 5px;
	font: 400 13px/20px Roboto, ${cjk};
	white-space: pre;
`

const Brand = styled.strong`
	margin-right: 23px;
	font: 700 12px/16px 'DejaVu Sans', sans-serif;
`

const WindowButton = styled.button`
	display: grid;
	place-items: center;
	width: 18px;
	height: 18px;
	margin-left: 4px;
	border: 1px solid #777;
	border-radius: 3px;
	background: ${p => (p.$danger ? 'linear-gradient(#f0907c, #e0442c)' : 'linear-gradient(#666, #333)')};
`

const Client = styled.div`
	flex: 1;
	min-height: 0;
	display: flex;
	flex-direction: column;
	margin: 0 4px;
	background: #000;
`

const BottomEdge = styled.footer`
	position: relative;
	flex: none;
	height: 8px;
	background: linear-gradient(#000 0, #3a3a3c 1px, #1c1c1e 3px, #0c0c0c);
`

const DockHandle = styled.span`
	position: absolute;
	right: 347px;
	bottom: 0;
	width: 39px;
	height: 7px;
	border: 2px solid #2f8fe8;
	border-bottom: 0;
	background: #e4edf8;
`

/* ---------- bars ---------- */

const Bar = styled.div`
	flex: none;
	display: flex;
	align-items: stretch;
	height: ${p => p.$h}px;
	background: ${p => p.$bg};
	border-top: 1px solid ${p => p.$line || '#fff'};
`

const Group = styled.div`
	display: flex;
	flex: ${p => (p.$fill ? '1' : 'none')};
	width: ${p => (p.$w ? `${p.$w}px` : 'auto')};
	margin-left: ${p => p.$gap || 0}px;
	border-right: ${p => (p.$fill ? '0' : '1px solid #b9b4bb')};
`

const Grip = styled.span`
	flex: none;
	width: 8px;
	border-left: 1px solid #f6f6f6;
	background: radial-gradient(circle, #8e8e8e 1px, transparent 1px) 2px 4px / 6px 4px repeat-y;
	background-clip: content-box;
	padding: 4px 0;
`

const Tool = styled.button`
	flex: none;
	display: grid;
	place-items: center;
	width: ${p => p.$w || 31}px;
	${p =>
		p.$pressed &&
		css`
			align-self: center;
			height: 22px;
			border: 1px solid #555;
			border-radius: 2px;
			background: #fff;
		`}
`

const TextTool = styled.button`
	display: flex;
	align-items: center;
	padding-right: ${p => p.$pad || 0}px;
	white-space: nowrap;
	color: ${p => (p.disabled ? '#8c8c8c' : '#000')};

	svg {
		margin: 0 4px 0 3px;
	}
`

const BigTool = styled.button`
	flex: none;
	display: flex;
	flex-direction: column;
	align-items: center;
	gap: 4px;
	width: 60px;
	padding-top: 3px;
	color: ${p => (p.disabled ? '#8c8c8c' : '#000')};
`

const Label = styled.span`
	max-width: 48px;
	line-height: 12px;
`

const Caret = styled.button`
	flex: none;
	display: flex;
	align-items: ${p => (p.$low ? 'flex-end' : 'center')};
	justify-content: center;
	width: 12px;
	padding-bottom: ${p => (p.$low ? 6 : 0)}px;
	margin-right: ${p => (p.$low ? 1 : 0)}px;

	&::after {
		content: '';
		border: solid transparent;
		border-width: 3px 3px 0;
		border-top-color: #000;
	}
`

const Divider = styled.span`
	flex: none;
	width: 6px;
	margin: 2px 0;
	background: linear-gradient(90deg, transparent 2px, #b4b4b4 2px, #b4b4b4 3px, #fff 3px, #fff 4px, transparent 4px);
`

const Tail = styled.div`
	flex: 1;
	display: flex;
	flex-direction: column;
	justify-content: space-between;
	align-items: flex-end;
	padding-right: 2px;
`

const More = styled.span`
	width: 12px;
	text-align: center;
	font: 700 14px/16px 'Liberation Sans', sans-serif;
`

const MenuBar = styled(Bar).attrs({as: 'nav'})`
	align-items: center;
	padding-right: 5px;

	${Grip} {
		align-self: stretch;
	}
`

const MenuItem = styled.button`
	margin-right: 13px;
	white-space: nowrap;
	line-height: 16px;
`

const Key = styled.span`
	display: inline-block;
	width: 18px;
	text-align: center;
	font: 12px/14px 'Liberation Serif', serif;
`

const MdiButton = styled.button`
	display: grid;
	place-items: center;
	width: 16px;
	height: 17px;
	margin-left: 3px;
	border: 1px solid #77777a;
	border-radius: 3px;
	background: #f7f7f7;
`

const Spacer = styled.span`
	flex: 1;
`

const SelectBox = styled.label`
	position: relative;
	align-self: center;
	width: ${p => p.$w}px;
	margin-left: ${p => p.$gap}px;

	&::before {
		content: '';
		position: absolute;
		top: 1px;
		right: 1px;
		width: 16px;
		height: 14px;
		background: linear-gradient(#d9eaff, #5aa6ee);
		pointer-events: none;
	}

	&::after {
		content: '';
		position: absolute;
		top: 5px;
		right: 4px;
		border: solid transparent;
		border-width: 6px 5px 0;
		border-top-color: #0a0a28;
		pointer-events: none;
	}
`

const Select = styled.select`
	display: block;
	appearance: none;
	width: 100%;
	height: 16px;
	padding-left: 1px;
	line-height: 14px;
	border: 1px solid #55575c;
	border-radius: 2px;
	background: #fff;
`

const StatusText = styled.output`
	flex: 1;
	padding-left: 2px;
	font: 700 13px/20px ${cjk};
	white-space: pre;
`

const StatusCell = styled.span`
	display: flex;
	align-items: center;
	justify-content: space-around;
	width: ${p => p.$w};
	border-right: 1px solid #fff;
`

/* ---------- resource bar and navigator ---------- */

const Main = styled.main`
	flex: 1;
	min-height: 0;
	display: flex;
	border-top: 1px solid #222;
	background: #000;
`

const TabRail = styled.nav`
	flex: none;
	width: 33px;
	padding: 16px 0 0 7px;
	background: linear-gradient(90deg, #8c8c8e, #acacae);
	border-right: 1px solid #77777a;
	overflow: hidden;
`

const RailTab = styled.button`
	display: grid;
	place-items: center;
	width: 26px;
	height: 41px;
	margin: 0 0 1px;
	margin-top: ${p => (p.$apart ? 13 : 0)}px;
	border: 1px solid #6c6c70;
	border-right: 0;
	border-radius: 4px 0 0 4px;
	background: ${p => (p.$active ? '#ececee' : 'linear-gradient(#d0d0d2, #b9b9bb)')};
`

const Panel = styled.section`
	flex: none;
	display: flex;
	flex-direction: column;
	width: 192px;
	padding: 0 10px 0 9px;
	background: linear-gradient(90deg, #f2f2f4, #e6e6e8);
	border-right: 1px solid #8c8c8e;
	border-bottom: 2px solid #b8b8ba;
`

const PanelTitle = styled.h2`
	display: flex;
	align-items: center;
	gap: 13px;
	height: 30px;
	margin: 0;
	padding-left: 4px;
	font: 700 13px/16px ${cjk};
`

const TreeBox = styled.div`
	flex: 1;
	min-height: 0;
	display: grid;
	grid-template: 17px minmax(0, 1fr) 16px / minmax(0, 1fr) 17px;
	border: 1px solid #66666a;
	background: #fff;
`

const ColumnHead = styled.div`
	display: flex;
	align-items: center;
	gap: 15px;
	padding-left: 7px;
	background: linear-gradient(#f2f2f4, #cfcfd2);
	border-bottom: 1px solid #9c9c9e;

	&::after {
		content: '';
		border: solid transparent;
		border-width: 0 5px 6px;
		border-bottom-color: #111;
	}
`

const Corner = styled.span`
	background: #adafb0;
	margin-right: 1px;
`

const Rows = styled.ul`
	overflow: hidden;
`

const Row = styled.li`
	display: flex;
	align-items: center;
	height: 20px;
	padding-left: ${p => (p.$child ? 29 : 5)}px;
	border-bottom: 1px dotted #c6c6ca;
	background: ${p => (p.$odd ? '#f5f5f8' : '#fff')};
	white-space: nowrap;

	svg {
		margin-right: 1px;
	}
`

const Toggle = styled.button`
	flex: none;
	width: 9px;
	height: 9px;
	margin-right: 6px;
	border: 1px solid #8a8a8e;
	border-radius: 2px;
	background:
		linear-gradient(#222, #222) center / 5px 1px no-repeat,
		${p => (p.$open ? 'none' : 'linear-gradient(#222, #222) center / 1px 5px no-repeat')},
		#f6f6f6;
`

const Branch = styled.span`
	align-self: stretch;
	width: 12px;
	border-left: 1px dotted #888;
	background: repeating-linear-gradient(90deg, #999 0, #999 1px, transparent 1px, transparent 2px) 0 9px / 9px 1px no-repeat;
`

const Check = styled.input`
	flex: none;
	appearance: none;
	width: 13px;
	height: 13px;
	margin: 0 1px 0 0;
	border: 1px solid #111;
	background: #fff;

	&:checked::before {
		content: '';
		display: block;
		width: 11px;
		height: 11px;
		background: #12c02c;
		clip-path: polygon(6% 36%, 34% 54%, 80% 2%, 100% 16%, 38% 100%, 2% 62%);
	}
`

const RowLabel = styled.label`
	flex: 1;
	align-self: stretch;
	padding: 4px 0 0 ${p => (p.$child ? 2 : 1)}px;
	outline: ${p => (p.$selected ? '1px dotted #e09a3c' : '0')};
	outline-offset: -1px;
	color: ${p => (p.$selected ? '#fff' : '#111')};
	background: ${p => (p.$selected ? '#3593f4' : 'none')};
`

const Count = styled.span`
	margin-left: 9px;
`

const Scroll = styled.div`
	display: flex;
	flex-direction: ${p => (p.$vertical ? 'column' : 'row')};
	align-items: center;
	gap: ${p => (p.$vertical ? 0 : 1)}px;
	padding-bottom: ${p => (p.$vertical ? 4 : 0)}px;
	background: #efeff1;
	${p => !p.$vertical && 'grid-column: 1 / 3;'}
`

const turns = {up: 180, down: 0, left: 90, right: -90}

const ScrollArrow = styled.button`
	display: grid;
	place-items: center;
	width: 18px;
	height: 16px;

	&::after {
		content: '';
		border: solid transparent;
		border-width: 4px 3px 0;
		border-top-color: #222;
		transform: rotate(${p => turns[p.$dir]}deg);
	}
`

const Thumb = styled.span`
	flex: none;
	width: ${p => (p.$vertical ? 15 : 57)}px;
	height: ${p => (p.$vertical ? 18 : 14)}px;
	margin-top: ${p => (p.$vertical ? 3 : 0)}px;
	border: 1px solid #8e8e92;
	border-radius: 2px;
	background:
		repeating-linear-gradient(
				${p => (p.$vertical ? '180deg' : '90deg')},
				#555 0,
				#555 1px,
				transparent 1px,
				transparent 3px
			)
			center / 7px 7px no-repeat,
		linear-gradient(#f4f4f6, #c9c9cd);
`

const Splitter = styled.div`
	display: flex;
	align-items: center;
	gap: 5px;
	height: 15px;
	flex: none;

	&::before,
	&::after {
		content: '';
		flex: 1;
		border-top: 1px solid #b2b2b6;
	}

	span {
		width: 28px;
		height: 6px;
		border: 1px solid #a8a8ac;
		background: #d0d0d4;
	}
`

const Viewport = styled.div`
	flex: 1;
	min-width: 0;
	background: #000;

	svg {
		width: 100%;
		height: 100%;
	}
`

/* ---------- data ---------- */

const menus = [
	['文件', 'F'],
	['编辑', 'E'],
	['视图', 'V'],
	['插入', 'S'],
	['格式', 'R'],
	['工具', 'T'],
	['装配', 'A'],
	['信息', 'I'],
	['分析', 'L'],
	['首选项', 'P'],
	['窗口', 'O'],
	['GC 工具箱'],
	['帮助', 'H'],
]

const railTabs = ['asmNav', 'mirror', 'partNav', 'books', 'info', 'web', 'clock', 'roles', 'colors', 'machine', 'people', 'scene']

const features = [
	...Array.from({length: 12}, () => ['体', 'body']),
	...Array.from({length: 3}, () => ['块', 'cube']),
	['求差', 'subtract'],
	['求差', 'subtract'],
	['圆柱', 'cyl'],
	['圆柱', 'cyl'],
	['求和', 'unite'],
	['圆柱', 'cyl'],
]

// '|' is a divider, 'v' a drop-down caret, '_' the overflow caret at the end
function Tools({items, w, size, pressed = []}) {
	return items.split(' ').map((name, i) => {
		if (name === '|') return <Divider key={i} />
		if (name === 'v') return <Caret key={i} aria-label="more" />
		if (name === '_') return <Caret key={i} $low aria-label="options" />
		return (
			<Tool key={i} $w={w} $pressed={pressed.includes(name)} aria-label={name}>
				<Icon name={name} size={size} />
			</Tool>
		)
	})
}

const Big = ({icon, children, disabled}) => (
	<BigTool disabled={disabled}>
		<Icon name={icon} />
		<Label>{children}</Label>
	</BigTool>
)

/* ---------- mould assembly ---------- */

const Screw = ({x, y}) => (
	<g transform={`translate(${x} ${y})`}>
		<ellipse rx="12" ry="7.5" fill="#0a0a0a" />
		<ellipse rx="9" ry="5" fill="#0c8a1c" stroke="#12e02c" strokeWidth="2" />
		<ellipse rx="6" ry="3.5" fill="#0a5c14" stroke="#000" strokeWidth="1.4" />
		<path d="M-2-2h5v4h-5z" fill="#0d7a1c" stroke="#000" strokeWidth=".8" />
	</g>
)

function SpringCoils({x, w, top, bottom}) {
	const ys = []
	for (let y = top; y < bottom - 6; y += 7) ys.push(y)
	return (
		<g>
			<path d={`M${x} ${top}v${bottom - top - 6}q${w / 2} 12 ${w} 0V${top}z`} fill="#16167c" stroke="#000" />
			{ys.map(y => (
				<g key={y} fill="none">
					<path d={`M${x} ${y}q${w / 2} 11 ${w} 0`} stroke="#000" strokeWidth="5" />
					<path d={`M${x} ${y}q${w / 2} 11 ${w} 0`} stroke="#3838fc" strokeWidth="3" />
				</g>
			))}
		</g>
	)
}

function Model() {
	return (
		<svg viewBox="229 235 957 588" role="img" aria-label="zhuangpeitu">
			<g stroke="#000" strokeWidth="1.5" strokeLinejoin="round">
				{/* base plate */}
				<polygon points="478,654 493,645 693,540 937,672 723,795" fill="#fff" />
				<polygon points="478,654 723,795 723,815 478,675" fill="#a9aaa8" />
				<polygon points="937,672 723,795 723,815 937,692" fill="#c2c2c2" />
				{/* ejector space */}
				<polygon points="532,580 669,655 669,765 532,684" fill="#fff" />
				<polygon points="533,580 547,588 547,641 533,650" fill="#c6c6c8" />
				<polygon points="533,650 668,727 668,742 533,664" fill="#7d8994" />
				<polygon points="533,664 668,742 668,759 533,682" fill="#9d8690" />
				<path d="M533 683l135 78" stroke="#fff" />
			</g>
			<ellipse cx="547" cy="650" rx="4" ry="3" fill="#2424b0" />
			<ellipse cx="584" cy="655" rx="4" ry="3" fill="#181878" />
			<SpringCoils x={546} w={43} top={588} bottom={657} />
			<SpringCoils x={647} w={34} top={648} bottom={716} />
			<path d="M658 720l8-3h4v7l-6 1z" fill="#2424b0" stroke="#000" strokeDasharray="2 1" />
			<g stroke="#000" strokeWidth="1.5" strokeLinejoin="round">
				{/* risers */}
				<polygon points="493,563 531,585 531,683 493,661" fill="#a8a9a8" />
				<polygon points="669,664 708,687 708,786 669,764" fill="#a8a9a8" />
				<polygon points="708,687 922,563 922,663 708,786" fill="#c1c1c1" />
				{/* support plate */}
				<polygon points="493,532 708,655 708,687 493,563" fill="#a17d5c" />
				<polygon points="708,655 922,532 922,563 708,687" fill="#c9986b" />
				{/* cavity plates */}
				<polygon points="493,446 708,570 708,655 493,532" fill="#a1565c" />
				<polygon points="708,570 922,446 922,532 708,655" fill="#c9676b" />
				<polygon points="493,390 708,510 708,570 493,446" fill="#6081a8" />
				<polygon points="708,510 922,400 922,446 708,570" fill="#6f9ccb" />
				{/* top clamp plate */}
				<polygon points="692,242 937,384 723,507 478,365" fill="#fff" />
				<polygon points="478,365 723,507 723,528 478,386" fill="#a5a5a3" />
				<polygon points="723,507 937,384 937,405 723,528" fill="#c4c2c4" />
				<path d="M531 586v97M668 665v98" strokeWidth="2" />
			</g>
			<g stroke="#000" strokeWidth="1.6">
				<ellipse cx="600" cy="482" rx="6" ry="8" transform="rotate(-25 600 482)" fill="#cfeeff" />
				<ellipse cx="600" cy="550" rx="6" ry="8" transform="rotate(-25 600 550)" fill="#ffb4b0" />
				<ellipse cx="802" cy="589" rx="4" ry="5" transform="rotate(25 802 589)" fill="#6c6c68" />
				<ellipse cx="827" cy="575" rx="4" ry="5" transform="rotate(25 827 575)" fill="#6c6c68" />
			</g>
			<path d="M714 787l9 5 9-5M718 786l5 3 5-3" fill="none" stroke="#000" strokeWidth="1.4" />
			<Screw x={678} y={290} />
			<Screw x={562} y={357} />
			<Screw x={853} y={391} />
			<Screw x={737} y={457} />

			{/* locating ring */}
			<g stroke="#000" strokeWidth="2">
				<path d="M656 367v7q6 29 52 30 46-1 52-30v-7z" fill="#8f4426" />
				<ellipse cx="708" cy="367" rx="52" ry="30" fill="#f7803f" />
				<ellipse cx="708" cy="367" rx="40" ry="24" fill="#964a28" />
			</g>
			<clipPath id="bore">
				<ellipse cx="708" cy="367" rx="39" ry="23" />
			</clipPath>
			<g clipPath="url(#bore)" stroke="#000" strokeWidth="1.5">
				<ellipse cx="708" cy="379" rx="38" ry="23" fill="#fff" />
				<ellipse cx="708" cy="388" rx="17" ry="8" fill="#9ac52c" />
				<path d="M691 388q17 6 34 0M700 388l16 3" fill="none" />
				<ellipse cx="698" cy="387" rx="4" ry="2" />
			</g>
			<ellipse cx="675" cy="349" rx="5" ry="4" />
			<ellipse cx="740" cy="386" rx="5" ry="4" />

			{/* highlighted body */}
			<g fill="none" stroke="#ff9c3a" strokeWidth="4">
				<ellipse cx="757" cy="436" rx="15" ry="7" />
				<ellipse cx="757" cy="456" rx="15" ry="7" />
				<ellipse cx="757" cy="446" rx="16" ry="11" fill="#ff9c3a" />
				<path d="M748 434q9-3 18 0M748 457q9 3 18 0" stroke="#fff" strokeWidth="1.5" />
				<ellipse cx="757" cy="494" rx="10" ry="6" />
			</g>

			{/* work coordinate system */}
			<path d="M707 442l-2-24 2-17 3 17z" fill="#3c52a8" />
			<path d="M711 443l14-11 21-8-11 10z" fill="#a9cfae" stroke="#6f9f78" strokeWidth=".6" />
			<path d="M710 447l21 8 16 12-20-7z" fill="#e09a98" stroke="#b06262" strokeWidth=".6" />
			<g fontFamily="Noto Sans" fontSize="12">
				<text x="711" y="399" fill="#1c3cf0">
					ZC
				</text>
				<text x="732" y="418" fill="#2c8c3c">
					YC
				</text>
				<text x="731" y="481" fill="#c82a2a">
					XC
				</text>
			</g>

			{/* view triad */}
			<path d="M279 753l15-8 15 8v18l-15 8-15-8z" fill="#9a9a9c" stroke="#c4c4c6" />
			<path d="M279 753l15 9 15-9M294 762v17M294 745v17M279 771l15-9 15 9" fill="none" stroke="#d4d4d6" />
			<path d="M280 769v-24" stroke="#2038f0" strokeWidth="3" />
			<path d="M281 771l20 12" stroke="#d02424" strokeWidth="3" />
			<circle cx="279" cy="771" r="4" fill="#e8e8e8" />
			<g fontFamily="Noto Sans" fontSize="12">
				<text x="276" y="744" fill="#2848ff">
					Z
				</text>
				<text x="303" y="791" fill="#e02424">
					X
				</text>
			</g>
		</svg>
	)
}

function Navigator() {
	return (
		<Panel>
			<PanelTitle>
				<Icon name="pin" size={13} />
				部件导航器
			</PanelTitle>
			<TreeBox>
				<ColumnHead>名称</ColumnHead>
				<Corner />
				<Rows>
					<Row $odd>
						<Toggle aria-label="图纸" />
						<Icon name="clock" size={16} />
						<Icon name="sheets" size={16} />
						<RowLabel as="span">图纸</RowLabel>
					</Row>
					<Row>
						<Toggle aria-label="用户表达式" />
						<Icon name="folderEq" size={16} />
						<RowLabel as="span">用户表达式</RowLabel>
					</Row>
					<Row $odd>
						<Toggle aria-label="组" />
						<Icon name="folder" size={16} />
						<RowLabel as="span">组</RowLabel>
					</Row>
					<Row>
						<Toggle $open aria-label="模型历史记录" />
						<Icon name="folder" size={16} />
						<RowLabel as="span">模型历史记录</RowLabel>
					</Row>
					{features.map(([name, icon], i) => (
						<Row key={i} $child $odd={i % 2 === 0}>
							<Branch />
							<Check type="checkbox" id={`feature-${i}`} defaultChecked />
							<Icon name={icon} size={16} />
							<RowLabel htmlFor={`feature-${i}`} $child $selected={i === 0}>
								{name}
								<Count>({i})</Count>
							</RowLabel>
						</Row>
					))}
				</Rows>
				<Scroll $vertical>
					<ScrollArrow $dir="up" aria-label="up" />
					<Thumb $vertical />
					<Spacer />
					<ScrollArrow $dir="down" aria-label="down" />
				</Scroll>
				<Scroll>
					<ScrollArrow $dir="left" aria-label="left" />
					<Thumb />
					<Spacer />
					<ScrollArrow $dir="right" aria-label="right" />
					<Grip as="i" />
				</Scroll>
			</TreeBox>
			<Splitter>
				<span />
			</Splitter>
		</Panel>
	)
}

const Stroke = ({d, c = '#fff', w = 2}) => (
	<svg width="14" height="14" viewBox="0 0 14 14" aria-hidden="true">
		<path d={d} fill="none" stroke={c} strokeWidth={w} />
	</svg>
)

export default function App() {
	return (
		<Window>
			<GlobalStyle />
			<TitleBar>
				<Icon name="nx" size={16} />
				<Title>NX 8.5 - 建模 - [zhuangpeitu_UG7.5.prt （修改的） ]</Title>
				<Brand>SIEMENS</Brand>
				<WindowButton aria-label="minimize">
					<Stroke d="M3 11h6" w={3} />
				</WindowButton>
				<WindowButton aria-label="maximize">
					<Stroke d="M2 3h10v9H2zM2 4h10" />
				</WindowButton>
				<WindowButton $danger aria-label="close">
					<Stroke d="M2 2l10 10M12 2L2 12" />
				</WindowButton>
			</TitleBar>

			<Client>
				<MenuBar $h={24} $bg="#e1e1e3">
					<Grip />
					<Tool $w={22} aria-label="part">
						<Icon name="part" size={16} />
					</Tool>
					{menus.map(([text, key]) => (
						<MenuItem key={text}>
							{text.startsWith('GC') ? (
								<>
									<Key>GC</Key>
									{text.slice(3)}
								</>
							) : (
								text
							)}
							{key && (
								<Key>
									(<u>{key}</u>)
								</Key>
							)}
						</MenuItem>
					))}
					<Spacer />
					<MdiButton aria-label="minimize part">
						<Stroke d="M3 11h7" c="#666" />
					</MdiButton>
					<MdiButton aria-label="restore part">
						<Stroke d="M5 5V2h7v6H9M2 6h7v6H2zM2 7h7" c="#666" w={1} />
					</MdiButton>
					<MdiButton aria-label="close part">
						<Stroke d="M3 3l8 8M11 3l-8 8" c="#555" w={3} />
					</MdiButton>
				</MenuBar>

				<Bar $h={34} $bg="#dadadc">
					<Group>
						<Grip />
						<Tools items="nx" />
						<TextTool>开始</TextTool>
						<Tools items="v new open save | cut copy paste del | undo redo | binoc" />
						<TextTool $pad={3}>命令查找器</TextTool>
						<Tools items="laptop v _" />
					</Group>
					<Group>
						<Grip />
						<Tools items="fit v laptop v cube v box v | section sectionEdit _" />
					</Group>
					<Group>
						<Grip />
						<Tools items="palette | showHide v | measure v ruler _" />
					</Group>
				</Bar>

				<Bar $h={62} $bg="linear-gradient(#d8d8da, #cbcecc)">
					<Group $w={599}>
						<Grip />
						<Big icon="plane">基准平面</Big>
						<Caret aria-label="more" />
						<Big icon="extrude">拉伸</Big>
						<Caret aria-label="more" />
						<Big icon="hole">孔</Big>
						<Big icon="thread">螺纹</Big>
						<Divider />
						<Big icon="pattern">阵列特征</Big>
						<Caret aria-label="more" />
						<Big icon="unite">求和</Big>
						<Caret aria-label="more" />
						<Big icon="trim">修剪体</Big>
						<Caret aria-label="more" />
						<Big icon="shell">抽壳</Big>
						<Tail>
							<More>»</More>
							<Caret $low aria-label="options" />
						</Tail>
					</Group>
					<Group $w={154}>
						<Grip />
						<Big icon="offset">偏置区域</Big>
						<Caret aria-label="more" />
						<Big icon="delFace">删除面</Big>
						<Caret $low aria-label="options" />
					</Group>
					<Group $w={146}>
						<Grip />
						<Tools items="plugCheck plugTree plugTable csys _" />
					</Group>
					<Group $fill>
						<Grip />
						<Big icon="chrome">真实着色</Big>
						<Big icon="metal" disabled>
							光亮金属刷色
						</Big>
						<Caret aria-label="more" />
						<Big icon="gloss" disabled>
							红色亮泽塑料
						</Big>
						<Caret aria-label="more" />
						<Tail>
							<More>»</More>
							<Caret $low aria-label="options" />
						</Tail>
					</Group>
				</Bar>

				<Bar $h={35} $bg="#cccfcd">
					<Group>
						<Grip />
						<Tools items="selBox layers layerList | tag | chkPart chkBrush chkAsm | abc _" />
					</Group>
					<Group>
						<Grip />
						<Tools items="rib groove handList _" />
					</Group>
					<Group>
						<Grip />
						<Tools items="spring springTilt disc | springDel _" />
					</Group>
					<Group $gap={94}>
						<Grip />
						<Tools items="tri table folderPts folderCirc _" />
					</Group>
					<Group $gap={32}>
						<Grip />
						<Tools items="lockAsm unlockAsm _" />
					</Group>
				</Bar>

				<Bar $h={27} $bg="linear-gradient(#c6c9c7, #dcdcde)" $line="#8e8e8e">
					<SelectBox $w={110} $gap={5}>
						<Select aria-label="选择过滤器" defaultValue="没有选择过滤器">
							<option>没有选择过滤器</option>
						</Select>
					</SelectBox>
					<SelectBox $w={117} $gap={8}>
						<Select aria-label="选择范围" defaultValue="整个装配">
							<option>整个装配</option>
						</Select>
					</SelectBox>
					<Group $fill $gap={3}>
						<Tools
							w={23}
							size={18}
							items="chain | filterOff snapUndo snapTree | wire glass | ptEnd ptMid ptCurve ptCross ptCenter ptQuad ptExist ptOn ptFace | grid"
							pressed={['ptEnd', 'ptMid', 'ptCenter', 'ptExist', 'ptOn']}
						/>
					</Group>
					<Caret $low aria-label="options" />
				</Bar>

				<Bar $h={22} $bg="#d8d8db">
					<StatusCell $w="46%" />
					<StatusText>体(0)  已选定</StatusText>
					<StatusCell />
					<StatusCell $w="20px" />
					<StatusCell $w="36px" />
					<StatusCell $w="42px">
						<Icon name="off" size={16} />
						<Icon name="full" size={16} />
					</StatusCell>
				</Bar>

				<Main>
					<TabRail>
						{railTabs.map(name => (
							<RailTab
								key={name}
								$active={name === 'partNav'}
								$apart={['info', 'web', 'clock'].includes(name)}
								aria-label={name}
							>
								<Icon name={name} />
							</RailTab>
						))}
					</TabRail>
					<Navigator />
					<Viewport>
						<Model />
					</Viewport>
				</Main>

				<Bar $h={34} $bg="#dcdcde">
					<Group>
						<Grip />
						<Tools items="offAsm asmAdd asmMove mirror | asmArr _" />
					</Group>
				</Bar>
				<Bar $h={34} $bg="#cdd0ce" $line="#b8bab9">
					<Group $gap={150}>
						<Grip />
						<Tools items="sketch" />
						<TextTool disabled $pad={3}>
							<Icon name="off" />
							完成草图
						</TextTool>
						<Tools items="profile skLine arc circle fillet chamfer rect spline point offCurve v | trimSk extSk | dim v | parallel coincide v tangent autoCon v _" />
					</Group>
				</Bar>
			</Client>
			<BottomEdge>
				<DockHandle />
			</BottomEdge>
		</Window>
	)
}
